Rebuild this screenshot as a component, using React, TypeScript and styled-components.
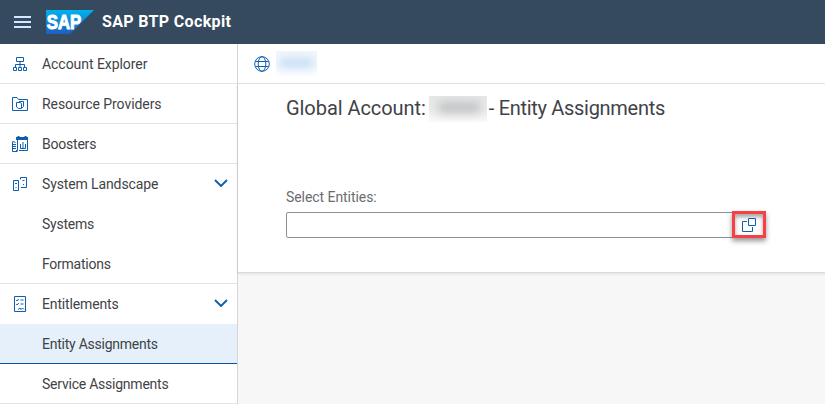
import React from "react";
import styled, { createGlobalStyle, css } from "styled-components";

const GlobalStyle = createGlobalStyle`
  *, *::before, *::after { box-sizing: border-box; }
  body { margin: 0; background: #f7f7f7; color: #3f4347; font-family: Roboto, "Liberation Sans", sans-serif; font-size: 14px; }
`;

const Page = styled.div`
  display: flex;
  flex-direction: column;
  height: 404px;
  overflow: hidden;
`;

const ShellBar = styled.header`
  display: flex;
  align-items: center;
  flex: 0 0 44px;
  padding-left: 14px;
  background: #354a5f;
`;

const MenuIcon = styled.svg`
  width: 17px;
  height: 12px;
  margin-right: 15px;
`;

const Logo = styled.svg`
  width: 48px;
  height: 24px;
  margin-right: 8px;
`;

const Product = styled.h1<{ $spacing: number }>`
  margin: 0;
  color: #fff;
  font-size: 16px;
  font-weight: 700;
  line-height: 18px;
  letter-spacing: ${(p) => p.$spacing}px;
`;

const Body = styled.div`
  display: flex;
  flex: 1;
  min-height: 0;
`;

const SideNav = styled.nav`
  flex: 0 0 238px;
  border-right: 1px solid #d5d5d5;
  background: #fff;
`;

const NavItem = styled.a<{ $divided?: boolean; $selected?: boolean }>`
  display: grid;
  grid-template-columns: 42px 1fr 22px;
  align-items: center;
  height: 40px;
  padding-right: 1px;
  border-bottom: 1px solid ${(p) => (p.$divided ? "#e3e3e3" : "transparent")};
  ${(p) =>
    p.$selected &&
    css`
      background: #e5f0fa;
      border-bottom-color: #0854a0;
    `}
`;

const NavIcon = styled.svg`
  width: 18px;
  height: 18px;
  margin-left: 11px;
  fill: none;
  stroke: #0f5fae;
`;

const NavLabel = styled.span<{ $spacing: number }>`
  grid-column: 2;
  line-height: 18px;
  letter-spacing: ${(p) => p.$spacing}px;
  white-space: nowrap;
`;

const Chevron = styled.svg`
  width: 14px;
  height: 8px;
  margin-bottom: 1px;
  fill: none;
  stroke: #0f5fae;
  stroke-width: 1.9;
`;

const Main = styled.main`
  flex: 1;
  min-width: 0;
`;

const Breadcrumb = styled.div`
  display: flex;
  align-items: center;
  height: 40px;
  padding-left: 16px;
  border-bottom: 1px solid #e3e3e3;
  background: #fff;
`;

const Globe = styled.svg`
  width: 16px;
  height: 16px;
  margin-right: 6px;
  fill: none;
  stroke: #0f5fae;
`;

const Redacted = styled.span<{ $tone: "link" | "title" }>`
  display: inline-block;
  flex: none;
  overflow: hidden;
  ${(p) =>
    p.$tone === "link"
      ? css`
          width: 41px;
          height: 26px;
          padding: 8px 4px 0;
          background: linear-gradient(#f0f6fc, #f2f7fd 60%, #fdfeff);
        `
      : css`
          width: 58px;
          height: 26px;
          padding: 6px 7px 0 9px;
          background: linear-gradient(#e6e7e7, #ececec 55%, #fafafa);
        `}

  &::before {
    content: "";
    display: block;
    height: ${(p) => (p.$tone === "link" ? 8 : 11)}px;
    background: ${(p) => (p.$tone === "link" ? "#bfdaf4" : "#c0c2c3")};
    filter: blur(${(p) => (p.$tone === "link" ? 4 : 5)}px);
  }
`;

const Panel = styled.section`
  height: 189px;
  padding: 12px 0 0 48px;
  border-bottom: 1px solid #d9d9d9;
  background: #fff;
  box-shadow: 0 1px 3px rgba(0, 0, 0, 0.1);
`;

const Title = styled.h2`
  display: flex;
  height: 26px;
  margin: 0;
  font-size: 20px;
  font-weight: 400;
  line-height: 24px;
  white-space: nowrap;
`;

const TitlePart = styled.span<{ $width: number; $spacing: number }>`
  width: ${(p) => p.$width}px;
  letter-spacing: ${(p) => p.$spacing}px;
`;

const FieldLabel = styled.label<{ $spacing: number }>`
  display: block;
  margin-top: 66px;
  color: #6a6d70;
  line-height: 18px;
  letter-spacing: ${(p) => p.$spacing}px;
`;

const Field = styled.div`
  position: relative;
  width: 479px;
  height: 26px;
  margin-top: 6px;
  border: 1px solid #89919a;
  border-radius: 2px;
  background: #fff;
`;

const Highlight = styled.button`
  position: absolute;
  top: -2px;
  right: -2px;
  width: 34px;
  height: 27px;
  padding: 0;
  border: 3px solid #f93f43;
  background: #fff;
  box-shadow: 0 3px 5px rgba(0, 0, 0, 0.42), inset 0 3px 4px rgba(0, 0, 0, 0.36);
`;

const ValueHelp = styled.svg`
  display: block;
  width: 15px;
  height: 15px;
  margin: 0 0 0 7px;
  fill: none;
  stroke: #0f5fae;
`;

type IconName = "hierarchy" | "folder" | "boosters" | "landscape" | "checklist";

const icons: Record<IconName, React.ReactNode> = {
  hierarchy: (
    <path d="M5.5 2.5h7v4h-7zM9 6.5v6M4.5 12V9.5h9V12M2.5 12.5h3v3h-3zM7.5 12.5h3v3h-3zM12.5 12.5h3v3h-3z" />
  ),
  folder: (
    <path d="M1.5 15.5V2.5h4.5l1.5 2h9v11zM8 6.5h4.5v5l-1.5 1.5M5.5 7.5h3.500l1.500 1v5H7.500l-2-1.500z" />
  ),
  boosters: (
    <>
      <path d="M6.500 4v11.500H5M16.500 4v11.500H8M9.500 9v4.500h5V9M12 7v6.500M1.500 6.500v10H6.500M2 6.500l2.500 1M2 9.500h3M2 11.500h3M2 13.500h3" />
      <path d="M5 3.500h12" strokeWidth="3" />
      <path d="M7.500 1v2M14.500 1v2" strokeWidth="2" />
    </>
  ),
  landscape: (
    <path d="M2.500 5.500h5v10h-5zM4 8.500h2M4.500 12.500h1M9.500 4.500V2.500h6v10H10M11.500 5.500h2M12 9.500h1" />
  ),
  checklist: (
    <>
      <path d="M3.500 1.500h11v15h-11z" />
      <path d="m5.200 5 1 1 1.500-2M9.500 5h3M5.200 9l1 1 1.500-2M9.500 9h3M7 14.500l2-1.500 1 1.500 1.500-1.500 1.500 1.500" />
    </>
  ),
};

interface Entry {
  label: string;
  spacing: number;
  icon?: IconName;
  divided?: boolean;
  selected?: boolean;
  expanded?: boolean;
}

const entries: Entry[] = [
  { label: "Account Explorer", spacing: -0.05, icon: "hierarchy", divided: true },
  { label: "Resource Providers", spacing: -0.06, icon: "folder", divided: true },
  { label: "Boosters", spacing: -0.22, icon: "boosters", divided: true },
  { label: "System Landscape", spacing: -0.12, icon: "landscape", expanded: true },
  { label: "Systems", spacing: -0.25 },
  { label: "Formations", spacing: -0.25, divided: true },
  { label: "Entitlements", spacing: -0.15, icon: "checklist", expanded: true },
  { label: "Entity Assignments", spacing: -0.24, selected: true },
  { label: "Service Assignments", spacing: -0.23, divided: true },
];

export default function App() {
  return (
    <Page>
      <GlobalStyle />
      <ShellBar>
        <MenuIcon viewBox="0 0 17 12">
          <path d="M0 1h17M0 6h17M0 11h17" stroke="#d1e8ff" strokeWidth="2" />
        </MenuIcon>
        <Logo viewBox="0 0 48 24">
          <defs>
            <linearGradient id="sap" x2="0" y2="1">
              <stop stopColor="#00b2ef" />
              <stop offset="1" stopColor="#1e5fbb" />
            </linearGradient>
          </defs>
          <path d="M0 0h48L24 24H0z" fill="url(#sap)" />
          <text x="0.8" y="19" fill="#fff" stroke="#fff" strokeWidth="1" fontFamily="Liberation Sans, sans-serif" fontWeight="700" fontSize="20" textLength="34.5" lengthAdjust="spacingAndGlyphs">
            SAP
          </text>
        </Logo>
        <Product $spacing={0.34}>SAP BTP Cockpit</Product>
      </ShellBar>
      <Body>
        <SideNav>
          {entries.map((e) => (
            <NavItem key={e.label} $divided={e.divided} $selected={e.selected}>
              {e.icon && <NavIcon viewBox="0 0 18 18">{icons[e.icon]}</NavIcon>}
              <NavLabel $spacing={e.spacing}>{e.label}</NavLabel>
              {e.expanded && (
                <Chevron viewBox="0 0 14 8">
                  <path d="m1 1 6 6 6-6" />
                </Chevron>
              )}
            </NavItem>
          ))}
        </SideNav>
        <Main>
          <Breadcrumb>
            <Globe viewBox="0 0 16 16">
              <circle cx="8" cy="8" r="7.3" />
              <ellipse cx="8" cy="8" rx="3.8" ry="7.3" />
              <path d="M1.5 5.5h13M1.5 10.5h13" />
            </Globe>
            <Redacted $tone="link" />
          </Breadcrumb>
          <Panel>
            <Title>
              <TitlePart $width={143} $spacing={-0.06}>Global Account:</TitlePart>
              <Redacted $tone="title" />
              <TitlePart $width={180} $spacing={-0.3}>&#8202;- Entity Assignments</TitlePart>
            </Title>
            <FieldLabel $spacing={-0.06}>Select Entities:</FieldLabel>
            <Field>
              <Highlight aria-label="Select entities">
                <ValueHelp viewBox="0 0 15 15">
                  <path d="M6.5 1.5h7v7h-7zM5 4.5H.5v10h10V10" />
                </ValueHelp>
              </Highlight>
            </Field>
          </Panel>
        </Main>
      </Body>
    </Page>
  );
}
